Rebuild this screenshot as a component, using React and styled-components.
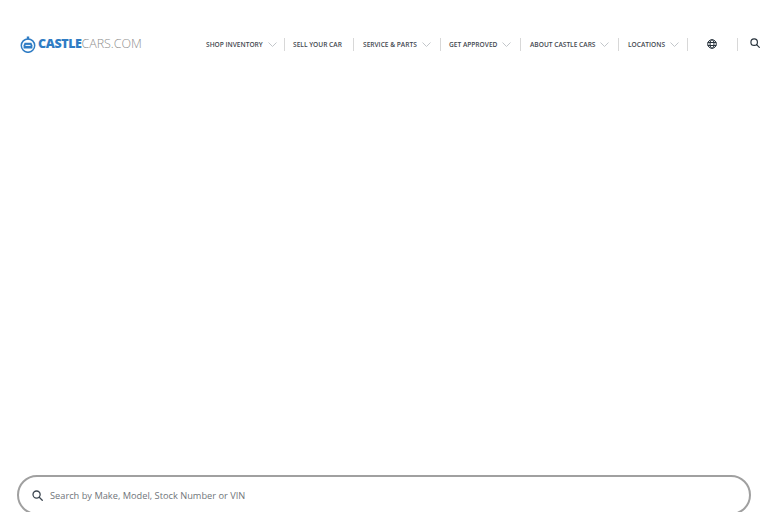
import React from "react";
import styled, { createGlobalStyle } from "styled-components";

const Global = createGlobalStyle`
  html, body { margin: 0; padding: 0; background: #fff; overflow: hidden; }
  #root { width: 768px; height: 512px; overflow: hidden; }
`;

const Page = styled.div`
  width: 768px;
  height: 512px;
  display: flex;
  flex-direction: column;
  justify-content: space-between;
  overflow: hidden;
  font-family: "Open Sans", "Liberation Sans", sans-serif;
`;

const Header = styled.header`
  height: 88px;
  display: flex;
  align-items: center;
  padding-left: 20px;
`;

const Logo = styled.a`
  display: flex;
  align-items: center;
  width: 186px;
  flex: none;
  font-size: 12.5px;
  line-height: 16px;
`;

const LogoStrong = styled.span`
  color: #2f7cc4;
  font-weight: 800;
  margin-left: 2px;
  letter-spacing: -0.4px;
`;

const LogoLight = styled.span`
  color: #8f8f8f;
  font-weight: 300;
  letter-spacing: -0.05px;
`;

const Nav = styled.nav`
  display: flex;
  align-items: center;
`;

const NavItem = styled.div`
  display: flex;
  align-items: center;
  height: 13px;
  width: ${(p) => p.$width}px;
  flex: none;
  box-sizing: border-box;
  border-right: ${(p) => (p.$plain ? "none" : "1px solid #d8d8d8")};
  padding-left: ${(p) => p.$pad ?? 0}px;
  padding-bottom: ${(p) => p.$lift ?? 0}px;
`;

const NavLabel = styled.span`
  font-size: 6.6px;
  font-weight: 600;
  color: #3f474f;
  white-space: nowrap;
  letter-spacing: 0;
`;

const Chevron = styled.svg`
  width: 9px;
  height: 5px;
  margin-left: 5px;
  flex: none;
`;

const GlyphIcon = styled.svg`
  display: block;
  flex: none;
`;

const SearchBar = styled.div`
  box-sizing: border-box;
  width: 734px;
  height: 40px;
  margin: 0 0 -3px 17px;
  padding: 1px 0 0 13px;
  border: 2px solid #a0a0a0;
  border-radius: 20px;
  display: flex;
  align-items: center;
  gap: 7px;
`;

const SearchText = styled.span`
  font-size: 9.25px;
  line-height: 14px;
  color: #70757a;
  white-space: nowrap;
`;

const ChevronIcon = () => (
  <Chevron viewBox="0 0 9 5" fill="none" stroke="#c2c6ca" strokeWidth="1">
    <path d="M0.5 0.5 4.5 4.5 8.5 0.5" />
  </Chevron>
);

const SearchGlyph = ({ size, color }) => (
  <GlyphIcon width={size} height={size} viewBox="0 0 12 12" fill="none" stroke={color} strokeWidth="1.4">
    <circle cx="5" cy="5" r="3.9" />
    <path d="M7.9 7.9 11.2 11.2" strokeLinecap="round" />
  </GlyphIcon>
);

const items = [
  { label: "SHOP INVENTORY", width: 79, chevron: true },
  { label: "SELL YOUR CAR", width: 69, pad: 8 },
  { label: "SERVICE & PARTS", width: 87, pad: 9, chevron: true },
  { label: "GET APPROVED", width: 80, pad: 8, chevron: true },
  { label: "ABOUT CASTLE CARS", width: 98, pad: 9, chevron: true },
  { label: "LOCATIONS", width: 69, pad: 9, chevron: true },
];

export default function App() {
  return (
    <Page>
      <Global />
      <Header>
        <Logo>
          <GlyphIcon width="16" height="17" viewBox="0 0 16 17" fill="none">
            <circle cx="8" cy="9.6" r="6.7" stroke="#2f7cc4" strokeWidth="1.5" />
            <path d="M6.8 0.6h2.4v3h-2.4z" fill="#2f7cc4" />
            <path d="M4.6 6.800h6.800l1 2.400v3.400h-8.800v-3.400z" fill="#2f7cc4" />
            <path d="M5.500 9.400h5" stroke="#fff" strokeWidth="1" />
          </GlyphIcon>
          <LogoStrong>CASTLE</LogoStrong>
          <LogoLight>CARS.COM</LogoLight>
        </Logo>
        <Nav>
          {items.map((it) => (
            <NavItem key={it.label} $width={it.width} $pad={it.pad}>
              <NavLabel>{it.label}</NavLabel>
              {it.chevron && <ChevronIcon />}
            </NavItem>
          ))}
          <NavItem $width={50} $pad={19}>
            <GlyphIcon width="10" height="10" viewBox="0 0 10 10" fill="none" stroke="#27323c" strokeWidth="1">
              <circle cx="5" cy="5" r="4.3" />
              <ellipse cx="5" cy="5" rx="2" ry="4.3" />
              <path d="M0.7 3.500h8.600M0.7 6.500h8.600" />
            </GlyphIcon>
          </NavItem>
          <NavItem $width={26} $pad={12} $lift={2} $plain>
            <SearchGlyph size={10} color="#27323c" />
          </NavItem>
        </Nav>
      </Header>
      <SearchBar>
        <SearchGlyph size={11} color="#3c4650" />
        <SearchText>Search by Make, Model, Stock Number or VIN</SearchText>
      </SearchBar>
    </Page>
  );
}
